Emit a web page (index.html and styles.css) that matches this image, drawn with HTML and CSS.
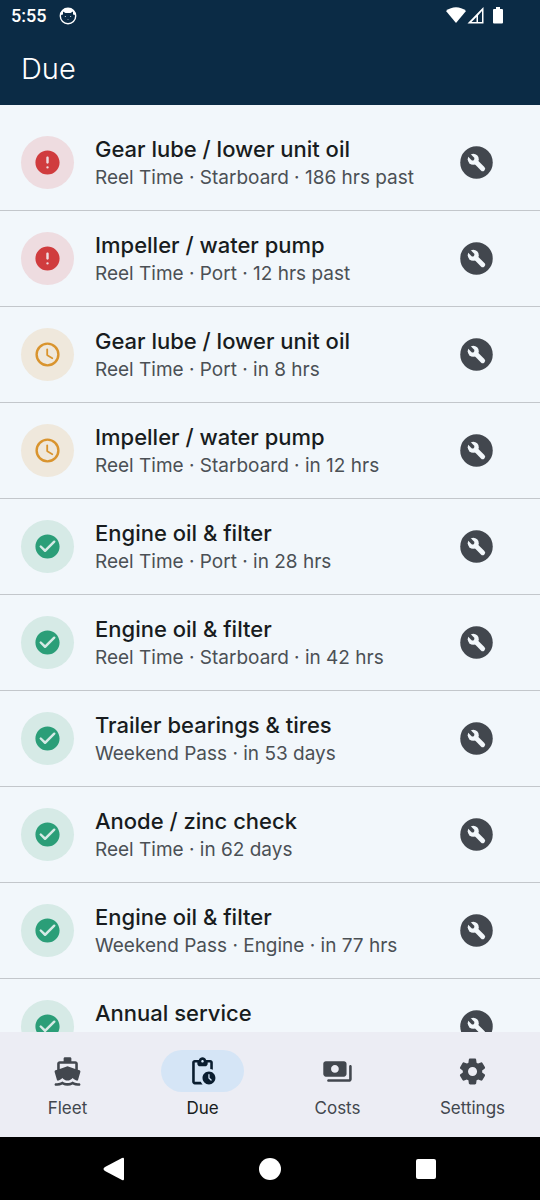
FILE: index.html
```html
<!DOCTYPE html>
<html lang="en">
<head>
<meta charset="utf-8">
<meta name="viewport" content="width=device-width, initial-scale=1">
<title>Due</title>
<link rel="stylesheet" href="styles.css">
</head>
<body>
<svg class="sprite" aria-hidden="true">
  <symbol id="error" viewBox="0 0 24 24"><path fill-rule="evenodd" d="M12 2C6.480 2 2 6.480 2 12s4.480 10 10 10 10-4.480 10-10S17.520 2 12 2zm0 11c-.55 0-1-.45-1-1V8c0-.55.45-1 1-1s1 .45 1 1v4c0 .55-.45 1-1 1zm0 2a1 1 0 1 1 0 2 1 1 0 0 1 0-2z"/></symbol>
  <symbol id="clock" viewBox="0 0 24 24"><circle cx="12" cy="12" r="9" fill="none" stroke="currentColor" stroke-width="2"/><path d="M11.780 7h-.06c-.4 0-.72.32-.72.72v4.720c0 .35.18.68.49.86l4.150 2.490c.34.2.78.1.98-.24.21-.34.1-.79-.25-.99l-3.870-2.300V7.720c0-.4-.32-.72-.72-.72z"/></symbol>
  <symbol id="check" viewBox="0 0 24 24"><path d="M12 2C6.480 2 2 6.480 2 12s4.480 10 10 10 10-4.480 10-10S17.520 2 12 2zM9.290 16.290 5.700 12.700a.996.996 0 1 1 1.410-1.410L10 14.170l6.880-6.880a.996.996 0 1 1 1.410 1.410l-7.590 7.590a.996.996 0 0 1-1.410 0z"/></symbol>
  <symbol id="wrench" viewBox="0 0 24 24"><circle cx="12" cy="12" r="10"/><circle class="steel" cx="10" cy="10" r="3.400"/><path class="handle" d="M11 11l4.800 4.800"/><path class="notch" d="M6 7.600 7.600 6l3 3q.3.800-.2 1.400-.600.500-1.400.2z"/></symbol>
</svg>
<div class="app">
  <header class="top">
    <div class="status">
      <span class="time">5:55</span>
      <svg class="cat" viewBox="0 0 18 18" aria-hidden="true"><circle cx="9" cy="9" r="7.700" fill="none" stroke="currentColor" stroke-width="1.400"/><path d="M1.500 8C2 4 5 1.300 9 1.300S16 4 16.500 8L14 7.500V4.500L11.500 6h-5L4 4.500v3z"/><circle cx="6.300" cy="9.500" r=".5"/><circle cx="11.700" cy="9.500" r=".5"/><path d="M8.500 12h1v.6h-1z"/></svg>
      <svg class="signals" viewBox="0 0 58 18" aria-hidden="true"><path d="M0 4C6-1 14-1 20 4L10 16z"/><path fill-rule="evenodd" d="M37.500 0v16.500h-16zM36 4v11H32V8.500zM30.500 10 25.500 15H30.500z"/><path d="M50 0h4v2h2q1 0 1 1v12.500q0 1-1 1h-8q-1 0-1-1V3q0-1 1-1h2z"/></svg>
    </div>
    <h1 class="title">Due</h1>
  </header>

  <main class="content">
    <ul class="tasks">
      <li class="task"><span class="badge overdue"><svg class="state" aria-hidden="true"><use href="#error"/></svg></span><div class="text"><h2 class="name">Gear lube / lower unit oil</h2><p class="detail">Reel Time · Starboard · 186 hrs past</p></div><button class="log" aria-label="Log service"><svg class="tool" aria-hidden="true"><use href="#wrench"/></svg></button></li>
      <li class="task"><span class="badge overdue"><svg class="state" aria-hidden="true"><use href="#error"/></svg></span><div class="text"><h2 class="name">Impeller / water pump</h2><p class="detail">Reel Time · Port · 12 hrs past</p></div><button class="log" aria-label="Log service"><svg class="tool" aria-hidden="true"><use href="#wrench"/></svg></button></li>
      <li class="task"><span class="badge soon"><svg class="state" aria-hidden="true"><use href="#clock"/></svg></span><div class="text"><h2 class="name">Gear lube / lower unit oil</h2><p class="detail">Reel Time · Port · in 8 hrs</p></div><button class="log" aria-label="Log service"><svg class="tool" aria-hidden="true"><use href="#wrench"/></svg></button></li>
      <li class="task"><span class="badge soon"><svg class="state" aria-hidden="true"><use href="#clock"/></svg></span><div class="text"><h2 class="name">Impeller / water pump</h2><p class="detail">Reel Time · Starboard · in 12 hrs</p></div><button class="log" aria-label="Log service"><svg class="tool" aria-hidden="true"><use href="#wrench"/></svg></button></li>
      <li class="task"><span class="badge ok"><svg class="state" aria-hidden="true"><use href="#check"/></svg></span><div class="text"><h2 class="name">Engine oil &amp; filter</h2><p class="detail">Reel Time · Port · in 28 hrs</p></div><button class="log" aria-label="Log service"><svg class="tool" aria-hidden="true"><use href="#wrench"/></svg></button></li>
      <li class="task"><span class="badge ok"><svg class="state" aria-hidden="true"><use href="#check"/></svg></span><div class="text"><h2 class="name">Engine oil &amp; filter</h2><p class="detail">Reel Time · Starboard · in 42 hrs</p></div><button class="log" aria-label="Log service"><svg class="tool" aria-hidden="true"><use href="#wrench"/></svg></button></li>
      <li class="task"><span class="badge ok"><svg class="state" aria-hidden="true"><use href="#check"/></svg></span><div class="text"><h2 class="name">Trailer bearings &amp; tires</h2><p class="detail">Weekend Pass · in 53 days</p></div><button class="log" aria-label="Log service"><svg class="tool" aria-hidden="true"><use href="#wrench"/></svg></button></li>
      <li class="task"><span class="badge ok"><svg class="state" aria-hidden="true"><use href="#check"/></svg></span><div class="text"><h2 class="name">Anode / zinc check</h2><p class="detail">Reel Time · in 62 days</p></div><button class="log" aria-label="Log service"><svg class="tool" aria-hidden="true"><use href="#wrench"/></svg></button></li>
      <li class="task"><span class="badge ok"><svg class="state" aria-hidden="true"><use href="#check"/></svg></span><div class="text"><h2 class="name">Engine oil &amp; filter</h2><p class="detail">Weekend Pass · Engine · in 77 hrs</p></div><button class="log" aria-label="Log service"><svg class="tool" aria-hidden="true"><use href="#wrench"/></svg></button></li>
      <li class="task"><span class="badge ok"><svg class="state" aria-hidden="true"><use href="#check"/></svg></span><div class="text"><h2 class="name">Annual service</h2><p class="detail">&nbsp;</p></div><button class="log" aria-label="Log service"><svg class="tool" aria-hidden="true"><use href="#wrench"/></svg></button></li>
    </ul>
  </main>

  <nav class="tabs">
    <a class="tab" href="#fleet"><span class="pill"><svg class="glyph" viewBox="0 0 24 24" aria-hidden="true"><path d="M20 21c-1.390 0-2.780-.47-4-1.320-2.440 1.710-5.560 1.710-8 0C6.780 20.530 5.390 21 4 21H3c-.55 0-1 .45-1 1s.45 1 1 1h1c1.380 0 2.740-.35 4-.99 2.520 1.290 5.480 1.290 8 0 1.260.65 2.620.99 4 .99h1c.55 0 1-.45 1-1s-.45-1-1-1h-1zM3.950 19H4c1.600 0 3.020-.88 4-2 .98 1.120 2.400 2 4 2s3.020-.88 4-2c.98 1.120 2.400 2 4 2h.05l1.890-6.680c.08-.26.06-.54-.06-.78s-.34-.42-.6-.5L20 10.620V6c0-1.100-.9-2-2-2h-3V2c0-.55-.45-1-1-1h-4c-.55 0-1 .45-1 1v2H6c-1.100 0-2 .9-2 2v4.620l-1.290.42c-.26.08-.48.26-.6.5s-.15.52-.06.78L3.950 19zM6 6h12v3.970L12 8 6 9.970V6z"/></svg></span><span class="label">Fleet</span></a>
    <a class="tab active" href="#due" aria-current="page"><span class="pill"><svg class="glyph" viewBox="0 0 24 24" aria-hidden="true"><path d="M17 12c-2.760 0-5 2.240-5 5s2.240 5 5 5 5-2.240 5-5-2.240-5-5-5zm1.290 7L16.650 17.350q-.15-.15-.15-.35v-2.500q0-.5.5-.5t.5.5v2.290L19 18.290q.3.350 0 .7t-.71 0zM18 3h-3.180C14.400 1.840 13.300 1 12 1s-2.400.84-2.820 2H6c-1.100 0-2 .9-2 2v15c0 1.100.9 2 2 2h6.110c-.59-.57-1.070-1.250-1.420-2H6V5h2v1c0 1.100.9 2 2 2h4c1.100 0 2-.9 2-2V5h2v5.080c.71.100 1.380.31 2 .6V5c0-1.100-.9-2-2-2zm-6 2c-.55 0-1-.45-1-1s.45-1 1-1 1 .45 1 1-.45 1-1 1z"/></svg></span><span class="label">Due</span></a>
    <a class="tab" href="#costs"><span class="pill"><svg class="glyph" viewBox="0 0 24 24" aria-hidden="true"><path d="M19 14V6c0-1.100-.9-2-2-2H3c-1.100 0-2 .9-2 2v8c0 1.100.9 2 2 2h14c1.100 0 2-.9 2-2zm-9-1c-1.660 0-3-1.340-3-3s1.340-3 3-3 3 1.340 3 3-1.340 3-3 3zm13-5v10c0 1.100-.9 2-2 2H5c-.55 0-1-.45-1-1s.45-1 1-1h16V8c0-.55.45-1 1-1s1 .45 1 1z"/></svg></span><span class="label">Costs</span></a>
    <a class="tab" href="#settings"><span class="pill"><svg class="glyph" viewBox="0 0 24 24" aria-hidden="true"><path d="M19.500 12c0-.23-.01-.45-.03-.68l1.860-1.410c.4-.3.51-.86.26-1.300l-1.870-3.230c-.25-.44-.79-.62-1.250-.42l-2.150.91c-.37-.26-.76-.49-1.170-.68l-.29-2.310C14.800 2.380 14.370 2 13.870 2h-3.730c-.51 0-.94.38-1 .88l-.29 2.310c-.41.19-.8.42-1.170.68l-2.150-.91c-.46-.2-1-.02-1.250.42L2.410 8.620c-.25.44-.14.99.26 1.300l1.860 1.410c-.02.22-.03.44-.03.67s.01.45.03.68l-1.860 1.410c-.4.3-.51.86-.26 1.300l1.870 3.230c.25.44.79.62 1.250.42l2.150-.91c.37.26.76.49 1.170.68l.29 2.310c.06.5.49.88.99.88h3.730c.5 0 .93-.38.99-.88l.29-2.310c.41-.19.8-.42 1.170-.68l2.150.91c.46.2 1 .02 1.250-.42l1.870-3.230c.25-.44.14-.99-.26-1.300l-1.860-1.410c.03-.23.04-.45.04-.68zm-7.460 3.500c-1.930 0-3.500-1.570-3.500-3.500s1.570-3.500 3.500-3.500 3.500 1.570 3.500 3.500-1.570 3.500-3.500 3.500z"/></svg></span><span class="label">Settings</span></a>
  </nav>

  <div class="system">
    <button class="key" aria-label="Back"><svg class="shape" viewBox="0 0 24 24" aria-hidden="true"><path d="M20 1q2-1 2 1v20q0 2-2 1L3 14q-3-2 0-4z"/></svg></button>
    <button class="key" aria-label="Home"><svg class="shape" viewBox="0 0 24 24" aria-hidden="true"><circle cx="12" cy="12" r="11"/></svg></button>
    <button class="key" aria-label="Overview"><svg class="shape" viewBox="0 0 24 24" aria-hidden="true"><rect x="2" y="2" width="20" height="20" rx="2"/></svg></button>
  </div>
</div>
</body>
</html>
```
FILE: styles.css
```css
* { box-sizing: border-box; }

body {
  margin: 0;
  font-family: Inter, Roboto, sans-serif;
  background: #f2f7fb;
  color: #181c20;
}

h1, h2, p, ul { margin: 0; padding: 0; }

svg { display: block; fill: currentColor; }

button {
  border: 0;
  padding: 0;
  background: none;
  color: inherit;
  cursor: pointer;
}

.sprite { position: absolute; width: 0; height: 0; }

.app {
  display: flex;
  flex-direction: column;
  height: 100vh;
}

.top { background: #0b2b45; color: #fff; }

.status {
  display: flex;
  align-items: center;
  gap: 13px;
  height: 32px;
  padding: 0 36px 0 11px;
}

.time {
  font: 500 18px/32px Roboto, sans-serif;
}

.cat { width: 18px; height: 18px; }

.signals { width: 58px; height: 18px; margin-left: auto; }

.title {
  padding: 0 21px;
  font-size: 29px;
  font-weight: 300;
  line-height: 73px;
}

.content {
  flex: 1;
  min-height: 0;
  overflow-y: auto;
  scrollbar-width: none;
}

.tasks { padding: 10px 0; list-style: none; }

.task {
  display: flex;
  align-items: center;
  gap: 21px;
  height: 96px;
  padding: 0 32px 0 21px;
  border-bottom: 1px solid #c3c7cb;
}

.badge {
  display: grid;
  place-items: center;
  flex: none;
  width: 53px;
  height: 53px;
  border-radius: 50%;
}

.overdue { background: #eedce0; color: #d03c3e; }
.soon { background: #efe8dc; color: #d9942e; }
.ok { background: #d6eae6; color: #2b9e78; }

.state { width: 29px; height: 29px; }

.text { flex: 1; min-width: 0; white-space: nowrap; }

.name {
  font-size: 22px;
  font-weight: 500;
  line-height: 31px;
}

.detail {
  color: #4b5055;
  font-size: 19px;
  line-height: 26px;
}

.log {
  display: grid;
  place-items: center;
  flex: none;
  width: 63px;
  height: 63px;
  color: #42474e;
}

.tool { width: 39px; height: 39px; }

.steel { fill: #f2f7fb; }
.handle { fill: none; stroke: #f2f7fb; stroke-width: 3; stroke-linecap: round; }
.notch { fill: #42474e; }

.tabs {
  display: flex;
  height: 105px;
  padding-top: 18px;
  background: #ecedf4;
}

.tab {
  display: flex;
  flex: 1;
  flex-direction: column;
  align-items: center;
  gap: 6px;
  color: #42474e;
  text-decoration: none;
}

.pill {
  display: grid;
  place-items: center;
  width: 83px;
  height: 42px;
  border-radius: 21px;
}

.active .pill { background: #d5e5f6; color: #0a1d2f; }
.active { color: #181c20; }

.glyph { width: 31px; height: 31px; }

.label { font-size: 17px; line-height: 21px; }

.system {
  display: flex;
  justify-content: center;
  gap: 92px;
  height: 63px;
  background: #000;
  color: #fff;
}

.key { display: grid; place-items: center; width: 64px; }

.shape { width: 24px; height: 24px; }
```
